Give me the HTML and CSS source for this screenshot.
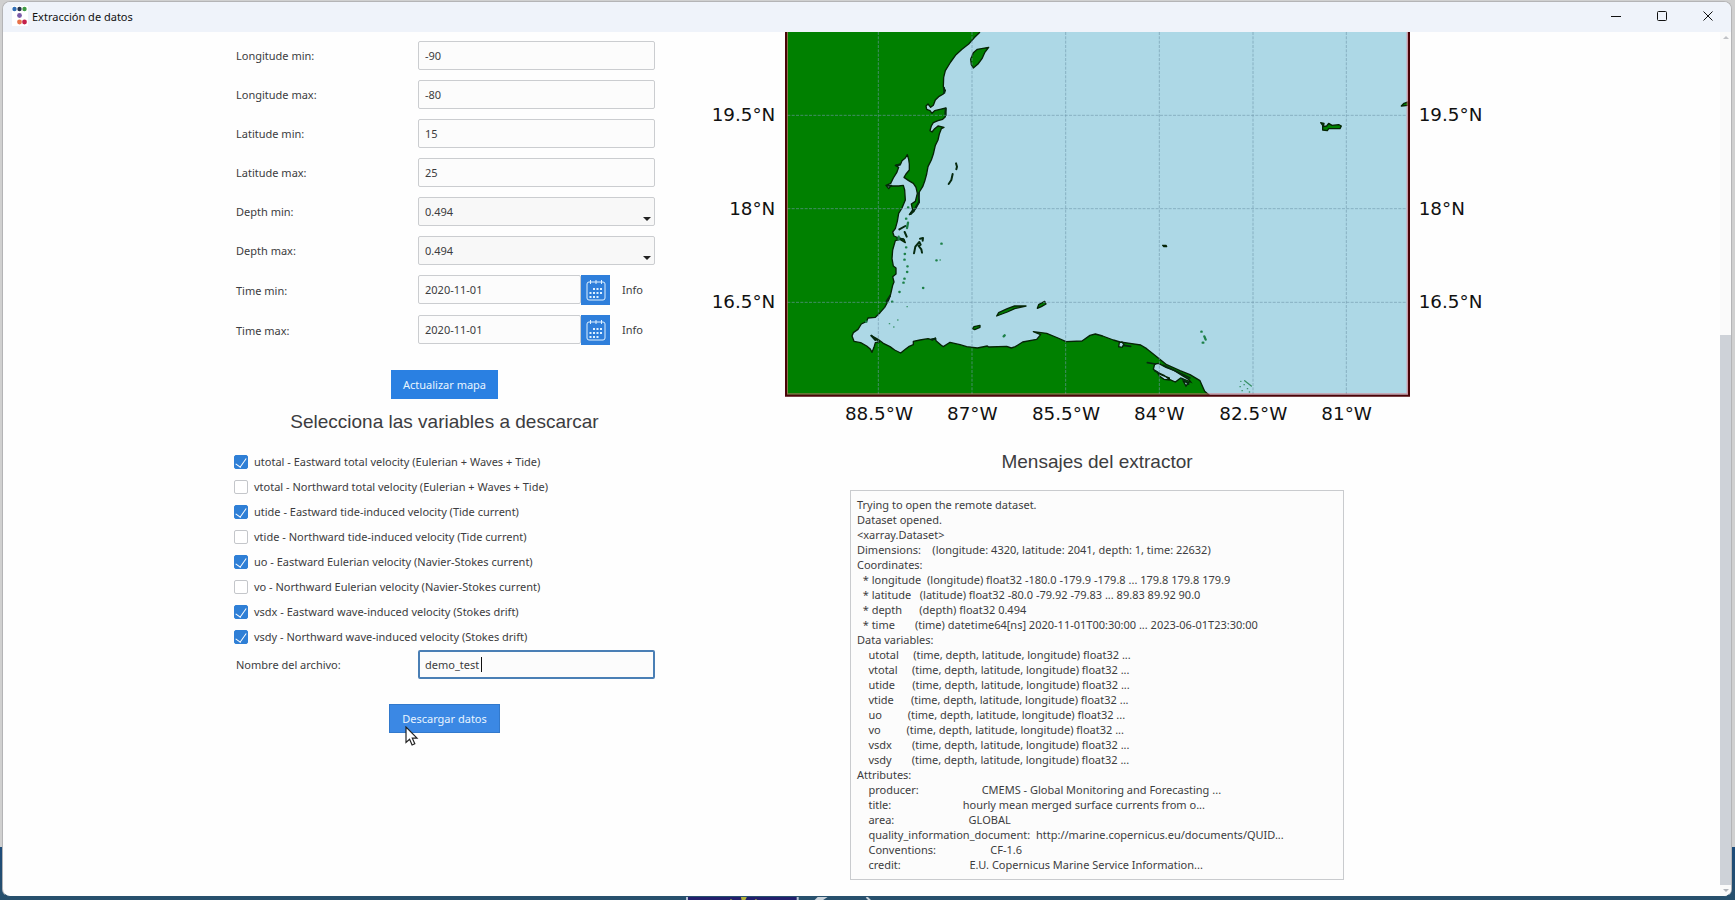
FILE: index.html
```html
<!DOCTYPE html>
<html lang="es">
<head>
<meta charset="utf-8">
<title>Extracción de datos</title>
<link rel="stylesheet" href="styles.css">
</head>
<body>
<div class="desktop">
<div class="window">
  <header class="titlebar">
    <svg class="logo" viewBox="0 0 16 20" aria-hidden="true">
      <rect width="16" height="20" fill="#fff"/>
      <circle cx="2.500" cy="3" r="2.200" fill="#2f6db5"/><circle cx="7.500" cy="3" r="2.200" fill="#26324a"/><circle cx="12.500" cy="3" r="2.200" fill="#3f9b45"/>
      <circle cx="7.500" cy="9.500" r="2.400" fill="#7a5aa8"/>
      <circle cx="7.500" cy="16" r="2.400" fill="#e8734a"/><circle cx="12.500" cy="16" r="2.400" fill="#c4204a"/>
    </svg>
    <h1 class="title">Extracción de datos</h1>
    <button class="win-btn" type="button" aria-label="Minimizar"><svg viewBox="0 0 12 12"><path d="M1 6.500h10"/></svg></button>
    <button class="win-btn" type="button" aria-label="Maximizar"><svg viewBox="0 0 12 12"><rect x="1.500" y="1.500" width="9" height="9" rx="1"/></svg></button>
    <button class="win-btn" type="button" aria-label="Cerrar"><svg viewBox="0 0 12 12"><path d="M1.500 1.500l9 9M10.500 1.500l-9 9"/></svg></button>
  </header>
  <div class="body">
    <main class="content">
      <form class="form">
        <div class="row"><label for="lonmin">Longitude min:</label><input class="field" id="lonmin" type="text" value="-90"></div>
        <div class="row"><label for="lonmax">Longitude max:</label><input class="field" id="lonmax" type="text" value="-80"></div>
        <div class="row"><label for="latmin">Latitude min:</label><input class="field" id="latmin" type="text" value="15"></div>
        <div class="row"><label for="latmax">Latitude max:</label><input class="field" id="latmax" type="text" value="25"></div>
        <div class="row"><label for="depmin">Depth min:</label><span class="combo"><select class="field" id="depmin"><option>0.494</option></select></span></div>
        <div class="row"><label for="depmax">Depth max:</label><span class="combo"><select class="field" id="depmax"><option>0.494</option></select></span></div>
        <div class="row"><label for="timmin">Time min:</label>
          <span class="date"><input class="field" id="timmin" type="text" value="2020-11-01"><button class="cal" type="button" aria-label="Elegir fecha mínima"><svg viewBox="0 0 20 22"><use href="#cal"/></svg></button><span class="info">Info</span></span></div>
        <div class="row"><label for="timmax">Time max:</label>
          <span class="date"><input class="field" id="timmax" type="text" value="2020-11-01"><button class="cal" type="button" aria-label="Elegir fecha máxima"><svg viewBox="0 0 20 22"><use href="#cal"/></svg></button><span class="info">Info</span></span></div>
        <button class="action" type="button">Actualizar mapa</button>
        <h2 class="heading">Selecciona las variables a descarcar</h2>
        <div class="checks">
          <label class="check"><input type="checkbox" checked>utotal - Eastward total velocity (Eulerian + Waves + Tide)</label>
          <label class="check"><input type="checkbox">vtotal - Northward total velocity (Eulerian + Waves + Tide)</label>
          <label class="check"><input type="checkbox" checked>utide - Eastward tide-induced velocity (Tide current)</label>
          <label class="check"><input type="checkbox">vtide - Northward tide-induced velocity (Tide current)</label>
          <label class="check"><input type="checkbox" checked>uo - Eastward Eulerian velocity (Navier-Stokes current)</label>
          <label class="check"><input type="checkbox">vo - Northward Eulerian velocity (Navier-Stokes current)</label>
          <label class="check"><input type="checkbox" checked>vsdx - Eastward wave-induced velocity (Stokes drift)</label>
          <label class="check"><input type="checkbox" checked>vsdy - Northward wave-induced velocity (Stokes drift)</label>
        </div>
        <div class="row"><label for="fname">Nombre del archivo:</label><span class="typing"><input class="field active" id="fname" type="text" value="demo_test"><i class="caret"></i></span></div>
        <div class="download">
          <button class="action hover" type="button">Descargar datos</button>
          <svg class="cursor" viewBox="0 0 14 21" aria-hidden="true"><path d="M1 1v15.500l3.600-3.300 2.500 5.800 2.700-1.200-2.500-5.600h4.700z" fill="#fff" stroke="#222" stroke-width="1.200"/></svg>
        </div>
      </form>
      <section class="side">
        <svg class="map" viewBox="33 36 2316 1188" role="img" aria-label="Mapa">
          <rect x="258" y="30" width="1870" height="1096" fill="#add8e6"/>
          <path class="land" d="M258 20L848 20L838 38L824 52L806 72L786 88L768 104L752 126L736 152L731 172L730 200L736 212L730 222L716 230L706 240L700 256L692 262L684 252L678 258L680 268L690 272L696 280L704 272L720 268L738 264L736 276L736 290L728 298L714 302L700 308L694 318L690 332L696 336L704 326L714 318L732 322L724 326L718 342L714 360L706 376L700 402L694 420L684 440L680 462L674 484L668 500L658 516L656 536L658 546L648 560L642 574L628 584L638 570L634 552L646 544L652 520L648 502L640 490L626 482L612 472L618 462L628 450L628 432L626 418L622 404L616 414L606 422L602 432L586 436L596 442L590 458L580 474L572 490L558 496L566 506L572 498L596 498L610 496L614 510L616 540L606 564L596 580L592 604L586 626L578 636L582 648L596 654L612 658L616 668L600 658L586 662L578 690L576 716L580 738L588 744L588 762L578 770L582 786L578 796L572 822L566 840L554 862L540 878L526 892L504 894L500 904L484 912L474 928L460 938L456 948L462 964L482 968L500 978L510 986L516 997L522 982L526 968L538 966L514 947L534 958L550 970L570 980L584 990L602 999L616 988L626 980L640 974L640 964L660 960L684 956L698 960L706 954L708 962L722 974L730 980L742 972L750 967L780 974L800 980L832 984L862 978L866 981L920 979L934 984L946 980L968 966L1010 958L1022 944L1000 935L1040 940L1074 954L1098 965L1146 963L1170 946L1186 942L1208 948L1240 960L1260 966L1290 970L1322 975L1340 986L1372 1012L1400 1034L1440 1052L1470 1064L1500 1082L1508 1100L1514 1114L1528 1126L258 1126Z"/>
          <g class="isle">
            <path d="M866 82L832 88L820 98L812 118L814 134L820 144L834 132L846 116L854 98Z"/>
            <path d="M890 888L896 878L922 866L944 858L978 858L944 866L922 876Z"/>
            <path d="M1012 865L1016 854L1034 844L1038 852L1024 860Z"/>
            <path d="M818 926L822 920L840 916L840 922L824 929Z"/>
            <path d="M1862 308L1872 310L1870 320L1880 318L1886 310L1896 316L1916 314L1924 318L1920 326L1886 326L1882 332L1868 330L1868 316Z"/>
            <path d="M2124 246L2112 250L2104 258L2124 256Z"/>
            <path d="M1388 676l10 0 2 4-8 0z"/>
          </g>
          <g class="dark">
            <path d="M768 430L771 440L769 448M758 462L754 480L746 492"/>
            <path d="M642 700L646 680L658 666L662 674L656 678L664 688L666 698M660 656L669 654L668 662"/>
            <path d="M598 628L616 618M614 636L620 650M592 655L610 658M656 520L657 546L646 566L632 582M732 204L733 218M737 266L737 286M570 828L560 844M514 947L526 960M590 436L600 434M562 497L574 497M696 958L706 956"/>
          </g>
          <g class="lagoon">
            <path d="M1258 968L1266 966L1272 974L1266 982L1256 980ZM1364 1032L1376 1030L1398 1042L1420 1050L1446 1066L1466 1078L1472 1086L1458 1080L1442 1074L1426 1086L1408 1078L1392 1066L1374 1058L1360 1048ZM1374 1060L1388 1066L1408 1074L1408 1080L1392 1078L1378 1068ZM1450 1084L1466 1088L1458 1098Z"/>
          </g>
          <path class="dark" d="M1342 1028L1366 1032M1390 1036L1420 1050L1446 1062L1470 1074M1364 1052L1378 1060M1446 1076L1466 1092M1270 976L1292 979"/>
          <path class="dots" d="M624 562h1M618 596h1M624 608l-3 16M618 682h1M614 702h1M613 719h1M622 739h1M621 756h1M613 776h1M610 788h1M598 816h1M576 845h1M724 671h1M709 721h1M669 804h1M498 905h1M914 946l-3 3M596 650v8M1504 935h1M1513 949l4 10M1508 968h2"/>
          <path class="specks" d="M621 860h1M568 911h1M593 900h1M581 921h1M720 720h1M1622 1084h1M1634 1082l20 16M1620 1100h1M1632 1094h1M1642 1106h1M1626 1112h1M1648 1116h1"/>
          <path class="grid" d="M535 36V1122M816 36V1122M1097 36V1122M1378 36V1122M1659 36V1122M1939 36V1122M262 286H2120M262 566H2120M262 847H2120"/>
          <path d="M262 30V1122H2122V30" fill="none" stroke="#e0707a" stroke-opacity=".6" stroke-width="4"/>
          <path d="M258 30V1127H2127V30" fill="none" stroke="#4a0408" stroke-width="6"/>
          <g class="ticks">
            <g text-anchor="end"><text x="226" y="303">19.5°N</text><text x="226" y="584">18°N</text><text x="226" y="863">16.5°N</text></g>
            <g><text x="2156" y="303">19.5°N</text><text x="2156" y="584">18°N</text><text x="2156" y="863">16.5°N</text></g>
            <g text-anchor="middle"><text x="537" y="1199">88.5°W</text><text x="817" y="1199">87°W</text><text x="1098" y="1199">85.5°W</text><text x="1378" y="1199">84°W</text><text x="1660" y="1199">82.5°W</text><text x="1940" y="1199">81°W</text></g>
          </g>
        </svg>
        <h2 class="heading" id="msgs">Mensajes del extractor</h2>
        <textarea class="console" rows="25" readonly aria-labelledby="msgs">Trying to open the remote dataset.
Dataset opened.
&lt;xarray.Dataset&gt;
Dimensions:    (longitude: 4320, latitude: 2041, depth: 1, time: 22632)
Coordinates:
  * longitude  (longitude) float32 -180.0 -179.9 -179.8 ... 179.8 179.8 179.9
  * latitude   (latitude) float32 -80.0 -79.92 -79.83 ... 89.83 89.92 90.0
  * depth      (depth) float32 0.494
  * time       (time) datetime64[ns] 2020-11-01T00:30:00 ... 2023-06-01T23:30:00
Data variables:
    utotal     (time, depth, latitude, longitude) float32 ...
    vtotal     (time, depth, latitude, longitude) float32 ...
    utide      (time, depth, latitude, longitude) float32 ...
    vtide      (time, depth, latitude, longitude) float32 ...
    uo         (time, depth, latitude, longitude) float32 ...
    vo         (time, depth, latitude, longitude) float32 ...
    vsdx       (time, depth, latitude, longitude) float32 ...
    vsdy       (time, depth, latitude, longitude) float32 ...
Attributes:
    producer:                      CMEMS - Global Monitoring and Forecasting ...
    title:                         hourly mean merged surface currents from o...
    area:                          GLOBAL
    quality_information_document:  http://marine.copernicus.eu/documents/QUID...
    Conventions:                   CF-1.6
    credit:                        E.U. Copernicus Marine Service Information...</textarea>
      </section>
    </main>
    <div class="scrollbar" aria-hidden="true"><i class="arrow up"></i><i class="thumb"></i><i class="arrow down"></i></div>
  </div>
</div>
<svg class="wallpaper" viewBox="0 0 1735 4" preserveAspectRatio="none" aria-hidden="true">
  <rect x="688" width="109" height="4" fill="#221f6c"/>
  <path d="M687 0v4M798 0v4" stroke="#b9c3d6" stroke-width="2"/>
  <path d="M741 0h6l-2 4h-3zM731 2l3 2h-5zM756 2l3 2h-5z" fill="#b3b23a"/>
  <path d="M818 0h10l-6 4h-8z" fill="#c9d2da"/><path d="M867 0l4 4" stroke="#c9d2da" stroke-width="2"/>
</svg>
</div>
<svg class="defs" aria-hidden="true"><defs>
  <g id="cal"><rect x="1" y="3" width="18" height="18" rx="2" fill="none" stroke="#dff1ff"/><path d="M4.500 1v4M10 1v4M15.500 1v4" stroke="#dff1ff"/>
  <path d="M7 10h10M3.500 14h14M3.500 18h10" stroke="#dff1ff" stroke-width="2" stroke-dasharray="2 1.500"/></g>
</defs></svg>
</body>
</html>
```

FILE: styles.css
```css
* { box-sizing: border-box; }
body { margin: 0; font-family: "Noto Sans", "Open Sans", sans-serif; font-size: 11px; line-height: 15px; color: #3c3c40; }
.desktop { min-height: 100vh; display: flex; flex-direction: column; padding: 1px 3px 0 2px; background: linear-gradient(#d0d0d0 94%, #1d4c7a 94%, #28506c); }
.window { flex: 1; display: flex; flex-direction: column; border: 1px solid #b4b4b6; border-bottom-color: #28506c; border-radius: 8px; overflow: hidden; background: #fefefe; }
.wallpaper { height: 4px; width: 100%; display: block; }
.titlebar { display: flex; align-items: center; height: 30px; padding: 0 0 2px 9px; background: #eff3fa; color: #111; }
.logo { width: 16px; height: 20px; margin-right: 4px; }
.title { flex: 1; margin: 0; font-size: 11px; font-weight: 400; }
.win-btn { width: 46px; height: 28px; padding: 0; border: 0; background: none; }
.win-btn svg { width: 12px; height: 12px; fill: none; stroke: #111; display: block; margin: auto; }
.body { flex: 1; display: flex; }
.content { flex: 1; display: flex; justify-content: center; gap: 56px; padding-right: 6px; }
.form { width: 421px; padding-top: 9px; display: flex; flex-direction: column; }
.row { display: grid; grid-template-columns: 182px 237px; align-items: center; padding-left: 2px; margin-bottom: 10px; }
.field { width: 100%; height: 29px; padding: 0 6px; border: 1px solid #cbcdd0; border-radius: 2px; background: #fcfcfc; font: inherit; color: inherit; display: block; outline: 0; }
.combo { position: relative; }
.combo .field { appearance: none; background: #f8f8f8; }
.combo::after { content: ""; position: absolute; right: 4px; bottom: 5px; border: 4px solid transparent; border-top: 4px solid #222; border-bottom: 0; }
.date { display: flex; align-items: flex-start; }
.date .field { width: 163px; }
.cal { width: 29px; height: 30px; padding: 0; border: 0; background: #2f7fdb; }
.cal svg { width: 20px; height: 22px; display: block; margin: auto; }
.info { margin-left: 12px; line-height: 29px; }
.action { align-self: center; margin: 15px 0 16px; height: 29px; padding: 0 12px; border: 0; background: #2a80e2; color: #e8f4ff; font: inherit; }
.heading { margin: 0; text-align: center; font: 400 19px/20px "Liberation Sans", sans-serif; color: #3c3c40; }
.form .heading { margin-top: -3px; }
.checks { margin: 17px 0 1px; display: flex; flex-direction: column; }
.check { display: flex; align-items: center; height: 25px; gap: 6px; }
.check input { appearance: none; width: 14px; height: 14px; margin: 0; border: 1px solid #c4c6ca; border-radius: 2px; background: #fff; }
.check input:checked { border-color: #2f7fd6; background: #2f7fd6; display: grid; place-items: center; }
.check input:checked::after { content: ""; width: 5px; height: 10px; border: solid #fff; border-width: 0 1px 1px 0; transform: rotate(35deg); }
.typing { position: relative; }
.field.active { border: 2px solid #4a7fb5; padding: 0 5px; }
.caret { position: absolute; left: 63px; top: 7px; width: 1px; height: 15px; background: #111; }
.download { position: relative; align-self: center; }
.action.hover { background: #3b88e4; border: 1px solid #3279cc; }
.cursor { position: absolute; left: 16px; top: 37px; width: 14px; height: 21px; }
.side { width: 772px; display: flex; flex-direction: column; align-items: center; }
.map { width: 100%; display: block; }
.land, .isle path { fill: #008000; stroke: #052405; stroke-width: 4; stroke-linejoin: round; }
.lagoon { fill: #add8e6; stroke: #052405; stroke-width: 4; }
.dark { fill: none; stroke: #062a10; stroke-width: 6; stroke-linecap: round; stroke-linejoin: round; }
path.dark { stroke-width: 5; }
.dots { fill: none; stroke: #1d8048; stroke-width: 7; stroke-linecap: round; }
.specks { fill: none; stroke: #3a9268; stroke-width: 4; stroke-linecap: round; }
.grid { fill: none; stroke: #6f98ab; stroke-opacity: .6; stroke-width: 3; stroke-dasharray: 9 4; }
.ticks { font-family: "DejaVu Sans", sans-serif; font-size: 55px; fill: #111; }
.side .heading { margin-top: 24px; }
.console { width: 494px; height: 390px; margin: 18px 0 16px; padding: 6px; border: 1px solid #c9cbce; background: #fcfcfc; color: inherit; font: inherit; line-height: 15px; resize: none; overflow: hidden; white-space: pre; outline: 0; }
.scrollbar { width: 11px; display: flex; flex-direction: column; align-items: center; background: #fafafa; }
.thumb { width: 11px; flex: 549 0 0; background: #ced2d8; order: 1; }
.scrollbar::before { content: ""; flex: 296 0 0; }
.arrow { border: 3px solid transparent; }
.up { border-bottom: 3px solid #c0c2c6; border-top: 0; margin-top: 4px; order: -1; }
.down { border-top: 3px solid #b0b4ba; border-bottom: 0; margin: 4px 0; order: 2; }
.defs { position: absolute; width: 0; height: 0; }
```
